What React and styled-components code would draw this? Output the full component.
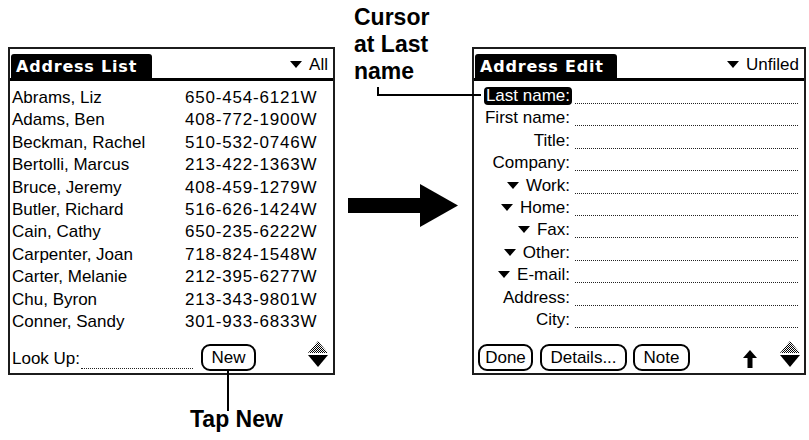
import styled, { createGlobalStyle } from "styled-components";

const GlobalStyle = createGlobalStyle`
  html, body {
    margin: 0;
    padding: 0;
    background: #fff;
  }
  body {
    font-family: "Liberation Sans", Arial, sans-serif;
    color: #000;
  }
`;

const Page = styled.div`
  width: 809px;
  height: 440px;
  overflow: hidden;
  display: flex;
  align-items: flex-start;
  padding-left: 8px;
  box-sizing: border-box;
`;

const Column = styled.div`
  position: relative;
  display: flex;
  flex-direction: column;
  width: ${(p) => p.$width}px;
  padding-top: ${(p) => p.$top || 0}px;
  flex-shrink: 0;
`;

const Panel = styled.div`
  height: 328px;
  border: 2px solid #1c1c1c;
  box-sizing: border-box;
  display: flex;
  flex-direction: column;
  font-size: 17px;
`;

const TitleBar = styled.div`
  display: flex;
  align-items: flex-end;
  justify-content: space-between;
  height: 29px;
  border-bottom: 3px solid #000;
  box-sizing: content-box;
`;

const TitleTab = styled.div`
  width: ${(p) => p.$width}px;
  height: 24px;
  margin-left: 1px;
  padding-left: 5px;
  box-sizing: border-box;
  background: #000;
  color: #fff;
  border-radius: 3px 3px 0 0;
  font-family: "DejaVu Sans", sans-serif;
  font-weight: 700;
  font-size: 16px;
  letter-spacing: 0.8px;
  line-height: 25px;
`;

const Category = styled.div`
  display: flex;
  align-items: center;
  padding-right: 5px;
  height: 26px;
  font-size: 17px;
`;

const Caret = styled.span`
  display: inline-block;
  width: 0;
  height: 0;
  border-left: 6px solid transparent;
  border-right: 6px solid transparent;
  border-top: 7px solid #000;
  margin-right: ${(p) => p.$gap || 6}px;
  vertical-align: middle;
  position: relative;
  top: -1px;
`;

const List = styled.div`
  padding: 6px 0 0 2px;
`;

const ListRow = styled.div`
  display: grid;
  grid-template-columns: 173px 1fr;
  height: 22.4px;
  line-height: 22.4px;
  white-space: nowrap;
`;

const Phone = styled.span`
  letter-spacing: 0.8px;
`;

const PhoneType = styled.span`
  margin-left: 0;
`;

const Footer = styled.div`
  margin-top: auto;
  display: flex;
  align-items: flex-end;
  padding: 0 ${(p) => p.$right || 4}px 2px ${(p) => p.$left || 2}px;
  height: 30px;
  box-sizing: border-box;
`;

const FooterText = styled.span`
  line-height: 22px;
  margin-bottom: 1px;
`;

const Field = styled.div`
  width: ${(p) => (p.$width ? `${p.$width}px` : "auto")};
  flex: ${(p) => (p.$width ? "none" : 1)};
  height: 18px;
  border-bottom: 1px dotted #222;
  margin: 0 ${(p) => p.$right || 0}px ${(p) => p.$bottom || 0}px ${(p) => p.$left || 0}px;
`;

const Button = styled.div`
  position: relative;
  width: ${(p) => p.$width}px;
  height: 27px;
  margin-left: ${(p) => p.$left || 0}px;
  border: 2px solid #000;
  border-radius: 9px;
  box-sizing: border-box;
  display: flex;
  align-items: center;
  justify-content: center;
  font-size: 17px;
  line-height: 1;
`;

const PointerButton = styled(Button)`
  &::after {
    content: "";
    position: absolute;
    left: 50%;
    top: 100%;
    width: 2px;
    height: 42px;
    margin-left: -2px;
    background: #000;
    z-index: 2;
  }
`;

const Spacer = styled.div`
  flex: 1;
`;

const Scroller = styled.div`
  display: flex;
  flex-direction: column;
  gap: 2px;
  margin-bottom: 4px;
`;

const ScrollUp = styled.div`
  width: 20px;
  height: 12px;
  clip-path: polygon(50% 0, 100% 100%, 0 100%);
  background: repeating-conic-gradient(#000 0 25%, #fff 0 50%) 0 0 / 2px 2px;
`;

const ScrollDown = styled.div`
  width: 20px;
  height: 12px;
  clip-path: polygon(0 0, 100% 0, 50% 100%);
  background: #000;
`;

const Form = styled.div`
  padding-top: 4px;
`;

const FormRow = styled.div`
  display: flex;
  align-items: flex-start;
  height: 22.4px;
  line-height: 22.4px;
`;

const LabelCell = styled.div`
  width: 98px;
  flex-shrink: 0;
  text-align: right;
  white-space: nowrap;
`;

const Label = styled.span`
  display: inline-block;
  padding: 0 2px;
  line-height: 18px;
  border-radius: 4px;
  background: ${(p) => (p.$selected ? "#000" : "transparent")};
  color: ${(p) => (p.$selected ? "#fff" : "#000")};
`;

const Callout = styled.div`
  font-weight: 700;
  font-size: 23px;
  line-height: 27px;
  color: #000;
  white-space: nowrap;
  margin-left: ${(p) => p.$left}px;
  margin-top: ${(p) => p.$top || 0}px;
`;

const Leader = styled.div`
  position: absolute;
  left: 42px;
  top: 87px;
  width: 102px;
  height: 7px;
  border-left: 2px solid #000;
  border-bottom: 2px solid #000;
  z-index: 3;
`;

const BigArrow = styled.svg`
  display: block;
  margin: 99px 0 0 13px;
`;

const UpArrow = styled.svg`
  display: block;
  margin: 0 23px 3px 0;
`;

const contacts = [
  ["Abrams, Liz", "650-454-6121"],
  ["Adams, Ben", "408-772-1900"],
  ["Beckman, Rachel", "510-532-0746"],
  ["Bertolli, Marcus", "213-422-1363"],
  ["Bruce, Jeremy", "408-459-1279"],
  ["Butler, Richard", "516-626-1424"],
  ["Cain, Cathy", "650-235-6222"],
  ["Carpenter, Joan", "718-824-1548"],
  ["Carter, Melanie", "212-395-6277"],
  ["Chu, Byron", "213-343-9801"],
  ["Conner, Sandy", "301-933-6833"],
];

const fields = [
  { label: "Last name:", selected: true },
  { label: "First name:" },
  { label: "Title:" },
  { label: "Company:" },
  { label: "Work:", caret: true },
  { label: "Home:", caret: true },
  { label: "Fax:", caret: true },
  { label: "Other:", caret: true },
  { label: "E-mail:", caret: true },
  { label: "Address:" },
  { label: "City:" },
];

const App = () => {
  return (
    <Page>
      <GlobalStyle />
      <Column $width={327} $top={47}>
        <Panel>
          <TitleBar>
            <TitleTab $width={141}>Address List</TitleTab>
            <Category>
              <Caret $gap={7} />
              All
            </Category>
          </TitleBar>
          <List>
            {contacts.map(([name, phone]) => (
              <ListRow key={name}>
                <span>{name}</span>
                <span>
                  <Phone>{phone}</Phone>
                  <PhoneType>W</PhoneType>
                </span>
              </ListRow>
            ))}
          </List>
          <Footer $left={2} $right={5}>
            <FooterText>Look Up:</FooterText>
            <Field $width={112} $left={1} $bottom={2} />
            <PointerButton $width={55} $left={8}>
              New
            </PointerButton>
            <Spacer />
            <Scroller>
              <ScrollUp />
              <ScrollDown />
            </Scroller>
          </Footer>
        </Panel>
        <Callout $left={182} $top={31}>
          Tap New
        </Callout>
      </Column>

      <Column $width={137} $top={4}>
        <Callout $left={19}>
          Cursor
          <br />
          at Last
          <br />
          name
        </Callout>
        <Leader />
        <BigArrow width="112" height="44" viewBox="0 0 112 44">
          <rect x="0" y="14" width="76" height="15" fill="#000" />
          <polygon points="72,0 110,21.5 72,43" fill="#000" />
        </BigArrow>
      </Column>

      <Column $width={334} $top={47}>
        <Panel>
          <TitleBar>
            <TitleTab $width={142}>Address Edit</TitleTab>
            <Category>
              <Caret $gap={7} />
              Unfiled
            </Category>
          </TitleBar>
          <Form>
            {fields.map((f) => (
              <FormRow key={f.label}>
                <LabelCell>
                  {f.caret && <Caret $gap={5} />}
                  <Label $selected={f.selected}>{f.label}</Label>
                </LabelCell>
                <Field $left={3} $right={6} />
              </FormRow>
            ))}
          </Form>
          <Footer $left={4} $right={4}>
            <Button $width={55}>Done</Button>
            <Button $width={87} $left={7}>
              Details...
            </Button>
            <Button $width={57} $left={6}>
              Note
            </Button>
            <Spacer />
            <UpArrow width="14" height="18" viewBox="0 0 14 18">
              <polygon points="7,0 14,8 9.5,8 9.5,18 4.5,18 4.5,8 0,8" fill="#000" />
            </UpArrow>
            <Scroller>
              <ScrollUp />
              <ScrollDown />
            </Scroller>
          </Footer>
        </Panel>
      </Column>
    </Page>
  );
};

export default App;
